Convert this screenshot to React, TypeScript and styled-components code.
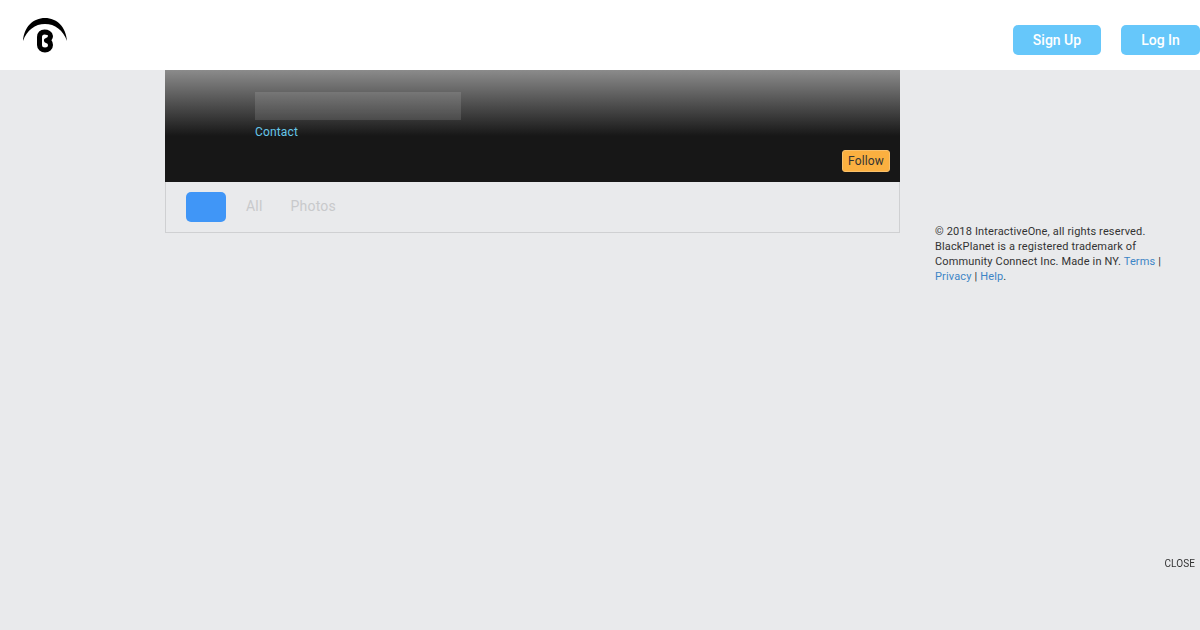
import React from "react";
import styled, { createGlobalStyle } from "styled-components";

const GlobalStyle = createGlobalStyle`
  html, body {
    margin: 0;
    padding: 0;
    height: 100%;
    overflow: hidden;
    background: #e9eaec;
    font-family: Roboto, "Liberation Sans", sans-serif;
  }
`;

const TopBar = styled.header`
  display: flex;
  align-items: center;
  height: 70px;
  padding-left: 22px;
  background: #fff;
`;

const Logo = styled.svg`
  width: 46px;
  height: 36px;
  display: block;
`;

const Actions = styled.nav`
  display: flex;
  gap: 20px;
  margin-left: auto;
  margin-top: 10px;
`;

const AuthButton = styled.a<{ $width: number }>`
  display: flex;
  align-items: center;
  justify-content: center;
  width: ${(props) => props.$width}px;
  height: 30px;
  background: #66c7fa;
  border-radius: 5px;
  color: #fff;
  font-size: 14px;
  font-weight: 500;
`;

const Main = styled.main`
  display: flex;
  align-items: flex-start;
  padding-left: 165px;
`;

const Profile = styled.section`
  width: 735px;
`;

const Cover = styled.div`
  display: flex;
  flex-direction: column;
  height: 112px;
  box-sizing: border-box;
  padding: 22px 10px 10px 90px;
  background: linear-gradient(to bottom, #8b8b8b 0, #171717 66px, #171717 100%);
`;

const NamePlaceholder = styled.div`
  width: 206px;
  height: 28px;
  background: rgba(255, 255, 255, 0.12);
`;

const ContactLink = styled.a`
  margin-top: 4px;
  color: #66c7ea;
  font-size: 12px;
  line-height: 16px;
  letter-spacing: 0.15px;
`;

const FollowButton = styled.button`
  align-self: flex-end;
  width: 48px;
  height: 22px;
  margin-top: auto;
  padding: 0;
  background: #fbb040;
  border: 1px solid #f9c06a;
  border-radius: 3px;
  color: #333;
  font-family: inherit;
  font-size: 12px;
  letter-spacing: 0.15px;
`;

const Tabs = styled.div`
  display: flex;
  align-items: center;
  gap: 20px;
  height: 51px;
  box-sizing: border-box;
  padding: 0 20px 3px;
  border: 1px solid #cfd0d2;
  border-top: none;
`;

const ActiveTab = styled.div`
  width: 40px;
  height: 30px;
  margin-top: 2px;
  background: #4096f7;
  border-radius: 5px;
`;

const Tab = styled.a<{ $gap?: number }>`
  margin-left: ${(props) => props.$gap ?? 0}px;
  color: #c8c9cb;
  font-size: 14px;
  letter-spacing: 0.2px;
`;

const Sidebar = styled.aside`
  width: 240px;
  margin-left: 35px;
  padding-top: 154px;
`;

const Legal = styled.p`
  margin: 0;
  color: #333;
  font-size: 11px;
  line-height: 15px;
  letter-spacing: 0.15px;
  white-space: nowrap;
`;

const LegalLink = styled.a`
  color: #3d85c6;
`;

const CloseLink = styled.a`
  position: fixed;
  right: 5px;
  top: 558px;
  color: #333;
  font-size: 10px;
  line-height: 12px;
  letter-spacing: 0.1px;
`;

const App: React.FC = () => {
  return (
    <>
      <GlobalStyle />
      <TopBar>
        <Logo viewBox="0 0 46 36">
          <path d="M1 24C2 10 11 1 23 1S44 10 45 24C41 13 33 7 23 7S5 13 1 24Z" fill="#000" />
          <path
            d="M17.5 20c0-3 2-5 5-5s6 1.500 6 4c0 2-1.500 3.500-4 4.500 2.500.5 4 2 4 4.500 0 3-2.500 5-5.500 5s-5.500-2-5.500-5Z"
            fill="none"
            stroke="#000"
            strokeWidth="5"
            strokeLinejoin="round"
          />
        </Logo>
        <Actions>
          <AuthButton $width={88}>Sign Up</AuthButton>
          <AuthButton $width={79}>Log In</AuthButton>
        </Actions>
      </TopBar>
      <Main>
        <Profile>
          <Cover>
            <NamePlaceholder />
            <ContactLink>Contact</ContactLink>
            <FollowButton>Follow</FollowButton>
          </Cover>
          <Tabs>
            <ActiveTab />
            <Tab>All</Tab>
            <Tab $gap={8}>Photos</Tab>
          </Tabs>
        </Profile>
        <Sidebar>
          <Legal>
            © 2018 InteractiveOne, all rights reserved.
            <br />
            BlackPlanet is a registered trademark of
            <br />
            Community Connect Inc. Made in NY. <LegalLink>Terms</LegalLink> |
            <br />
            <LegalLink>Privacy</LegalLink> | <LegalLink>Help</LegalLink>.
          </Legal>
        </Sidebar>
      </Main>
      <CloseLink>CLOSE</CloseLink>
    </>
  );
};

export default App;
